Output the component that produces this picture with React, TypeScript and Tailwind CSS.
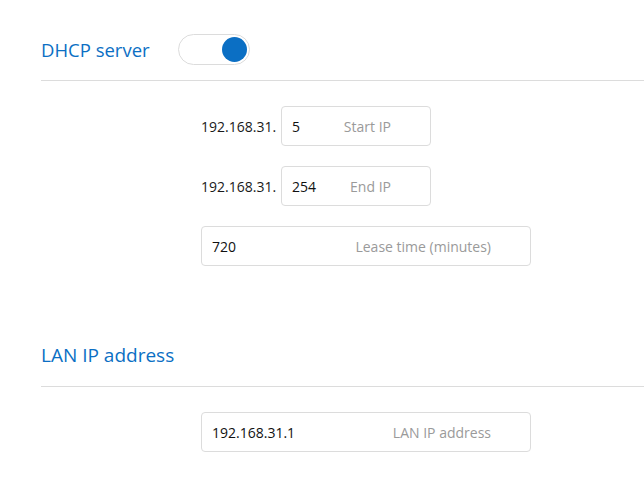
import React from "react";

function Toggle({ on }: { on: boolean }) {
  return (
    <div className="w-[72px] h-[31px] rounded-full border border-[#dcdcdc] bg-white flex items-center justify-end pr-[2px]">
      {on && <div className="w-[25px] h-[25px] rounded-full bg-[#0b6fc4]" />}
    </div>
  );
}

function Field({
  value,
  label,
  width,
}: {
  value: string;
  label: string;
  width: string;
}) {
  return (
    <div
      className={`${width} h-[40px] border border-[#dcdcdc] rounded-[4px] flex items-center justify-between pl-[10px] pr-[39px] text-[14px]`}
    >
      <span className="text-[#111]">{value}</span>
      <span className="text-[#9a9a9a]">{label}</span>
    </div>
  );
}

export default function App() {
  return (
    <div className="w-[644px] h-[484px] bg-white overflow-hidden pl-[41px] font-['Open_Sans',sans-serif]">
      {/* DHCP server header */}
      <div className="pt-[34px] flex items-center h-[65px]">
        <div className="w-[137px] text-[18.5px] leading-[24px] text-[#0b6fc4]">DHCP server</div>
        <Toggle on />
      </div>
      <div className="mt-[15px] border-t border-[#dcdcdc]" />

      <div className="ml-[160px] mt-[25px] flex flex-col gap-[20px]">
        <div className="flex items-center">
          <span className="w-[80px] text-[14px] text-[#1a1a1a]">192.168.31.</span>
          <Field value="5" label="Start IP" width="w-[150px]" />
        </div>
        <div className="flex items-center">
          <span className="w-[80px] text-[14px] text-[#1a1a1a]">192.168.31.</span>
          <Field value="254" label="End IP" width="w-[150px]" />
        </div>
        <Field value="720" label="Lease time (minutes)" width="w-[330px]" />
      </div>

      {/* LAN IP address section */}
      <div className="mt-[77px] text-[19px] leading-[24px] text-[#0b6fc4]">LAN IP address</div>
      <div className="mt-[19px] border-t border-[#dcdcdc]" />
      <div className="ml-[160px] mt-[25px]">
        <Field value="192.168.31.1" label="LAN IP address" width="w-[330px]" />
      </div>
    </div>
  );
}
